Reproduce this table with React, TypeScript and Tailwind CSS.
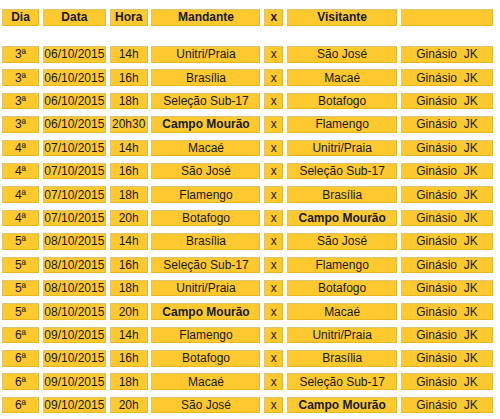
import React from "react";

type Jogo = {
  dia: string;
  data: string;
  hora: string;
  mandante: string;
  visitante: string;
};

const jogos: Jogo[] = [
  { dia: "3ª", data: "06/10/2015", hora: "14h", mandante: "Unitri/Praia", visitante: "São José" },
  { dia: "3ª", data: "06/10/2015", hora: "16h", mandante: "Brasília", visitante: "Macaé" },
  { dia: "3ª", data: "06/10/2015", hora: "18h", mandante: "Seleção Sub-17", visitante: "Botafogo" },
  { dia: "3ª", data: "06/10/2015", hora: "20h30", mandante: "Campo Mourão", visitante: "Flamengo" },
  { dia: "4ª", data: "07/10/2015", hora: "14h", mandante: "Macaé", visitante: "Unitri/Praia" },
  { dia: "4ª", data: "07/10/2015", hora: "16h", mandante: "São José", visitante: "Seleção Sub-17" },
  { dia: "4ª", data: "07/10/2015", hora: "18h", mandante: "Flamengo", visitante: "Brasília" },
  { dia: "4ª", data: "07/10/2015", hora: "20h", mandante: "Botafogo", visitante: "Campo Mourão" },
  { dia: "5ª", data: "08/10/2015", hora: "14h", mandante: "Brasília", visitante: "São José" },
  { dia: "5ª", data: "08/10/2015", hora: "16h", mandante: "Seleção Sub-17", visitante: "Flamengo" },
  { dia: "5ª", data: "08/10/2015", hora: "18h", mandante: "Unitri/Praia", visitante: "Botafogo" },
  { dia: "5ª", data: "08/10/2015", hora: "20h", mandante: "Campo Mourão", visitante: "Macaé" },
  { dia: "6ª", data: "09/10/2015", hora: "14h", mandante: "Flamengo", visitante: "Unitri/Praia" },
  { dia: "6ª", data: "09/10/2015", hora: "16h", mandante: "Botafogo", visitante: "Brasília" },
  { dia: "6ª", data: "09/10/2015", hora: "18h", mandante: "Macaé", visitante: "Seleção Sub-17" },
  { dia: "6ª", data: "09/10/2015", hora: "20h", mandante: "São José", visitante: "Campo Mourão" },
];

const cols = "grid grid-cols-[37px_63px_38px_109px_19px_110px_92px] gap-x-[3.83px]";

function Cell({ children, bold }: { children?: React.ReactNode; bold?: boolean }) {
  return (
    <div
      className={
        "h-[16.5px] flex items-center justify-center bg-[#fdc92e] border border-t-[#dcc27a] border-l-[#dcc27a] border-b-[#e9b81e] border-r-[#e9b81e] text-[12px] leading-none text-[#1a1a1a] whitespace-nowrap " +
        (bold ? "font-bold" : "")
      }
    >
      {children}
    </div>
  );
}

export default function App() {
  return (
    <div className="w-[500px] h-[419px] bg-white overflow-hidden pl-[2px] pt-[9px] font-['Liberation_Sans',Arial,sans-serif]">
      {/* Cabeçalho */}
      <div className={cols}>
        <Cell bold>Dia</Cell>
        <Cell bold>Data</Cell>
        <Cell bold>Hora</Cell>
        <Cell bold>Mandante</Cell>
        <Cell bold>x</Cell>
        <Cell bold>Visitante</Cell>
        <Cell />
      </div>

      {/* Jogos */}
      <div className={cols + " gap-y-[6.9px] mt-[20.5px]"}>
        {jogos.map((j, i) => (
          <React.Fragment key={i}>
            <Cell>{j.dia}</Cell>
            <Cell>{j.data}</Cell>
            <Cell>{j.hora}</Cell>
            <Cell bold={j.mandante === "Campo Mourão"}>{j.mandante}</Cell>
            <Cell>x</Cell>
            <Cell bold={j.visitante === "Campo Mourão"}>{j.visitante}</Cell>
            <Cell>Ginásio{"\u00a0"} JK</Cell>
          </React.Fragment>
        ))}
      </div>
    </div>
  );
}
